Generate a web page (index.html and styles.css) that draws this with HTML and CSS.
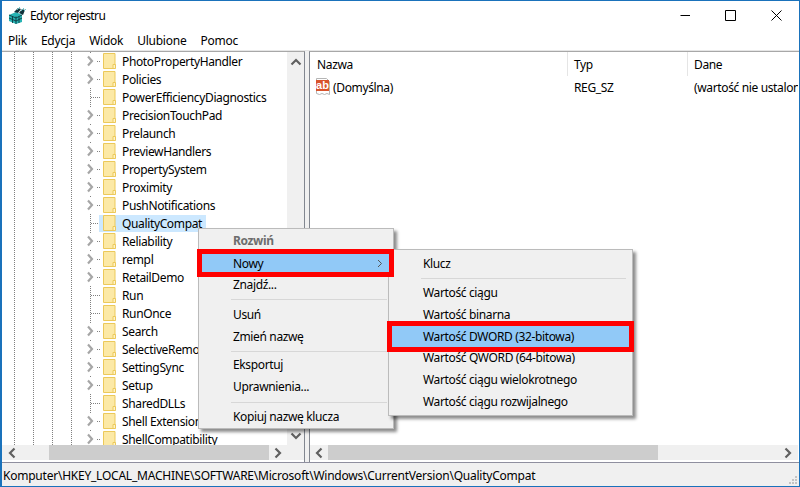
FILE: index.html
```html
<!DOCTYPE html>
<html lang="pl">
<head>
<meta charset="utf-8">
<title>Edytor rejestru</title>
<link rel="stylesheet" href="styles.css">
</head>
<body>
<svg class="defs" width="0" height="0" aria-hidden="true">
  <defs>
    <symbol id="chev" viewBox="0 0 8 12"><path d="M2 1.500 6 6l-4 4.500" fill="none" stroke="#a6a6a6" stroke-width="2.200"/></symbol>
    <symbol id="folder" viewBox="0 0 13 16">
      <path d="M.5.500h11.500v15H.5z" fill="#fce9a6" stroke="#ecc95a"/>
      <path d="M10 15.500v-4h2.500v4z" fill="#fff3c9" stroke="#ecc95a"/>
    </symbol>
  </defs>
</svg>
<div class="window">
  <header class="titlebar">
    <svg class="appicon" width="17" height="17" viewBox="0 0 17 17">
      <path d="M0 8 7 5l6 3v7l-6 2-7-3z" fill="#27b3b3"/>
      <path d="M7 9.500V17M0 8l7 3 6-3M3.500 9.500v6.500M10 9.500V16M0 11l7 3 6-3" stroke="#0b3a42" stroke-width=".9" fill="none"/>
      <path d="M5 5 9 1l3 1-3 4zM10 6l3-4 3 1-2 5z" fill="#10323a"/>
      <path d="M8 3l3-3M12 4l3-3M15 4l2-2" stroke="#5fc4c8" stroke-width=".9"/>
    </svg>
    <span class="title">Edytor rejestru</span>
    <div class="controls">
      <span class="ctl"><svg width="11" height="11" viewBox="0 0 11 11"><path d="M1.500 5.500H11" stroke="#000"/></svg></span>
      <span class="ctl"><svg width="11" height="11" viewBox="0 0 11 11"><path d="M.5.500h10v10H.5z" fill="none" stroke="#000"/></svg></span>
      <span class="ctl"><svg width="11" height="11" viewBox="0 0 11 11"><path d="M.5.500l10 10M10.500.500l-10 10" stroke="#000"/></svg></span>
    </div>
  </header>
  <nav class="menubar">
    <span>Plik</span><span>Edycja</span><span>Widok</span><span>Ulubione</span><span>Pomoc</span>
  </nav>
  <main class="panes">
    <section class="treepane">
      <div class="treebody">
        <div class="tree">
          <div class="row"><span class="exp"><svg width="8" height="12"><use href="#chev"/></svg></span><span class="stub"></span><svg class="fold" width="13" height="16"><use href="#folder"/></svg><span class="lbl">PhotoPropertyHandler</span></div>
          <div class="row"><span class="exp"><svg width="8" height="12"><use href="#chev"/></svg></span><span class="stub"></span><svg class="fold" width="13" height="16"><use href="#folder"/></svg><span class="lbl">Policies</span></div>
          <div class="row leaf"><span class="exp"></span><span class="stub"></span><svg class="fold" width="13" height="16"><use href="#folder"/></svg><span class="lbl">PowerEfficiencyDiagnostics</span></div>
          <div class="row"><span class="exp"><svg width="8" height="12"><use href="#chev"/></svg></span><span class="stub"></span><svg class="fold" width="13" height="16"><use href="#folder"/></svg><span class="lbl">PrecisionTouchPad</span></div>
          <div class="row"><span class="exp"><svg width="8" height="12"><use href="#chev"/></svg></span><span class="stub"></span><svg class="fold" width="13" height="16"><use href="#folder"/></svg><span class="lbl">Prelaunch</span></div>
          <div class="row"><span class="exp"><svg width="8" height="12"><use href="#chev"/></svg></span><span class="stub"></span><svg class="fold" width="13" height="16"><use href="#folder"/></svg><span class="lbl">PreviewHandlers</span></div>
          <div class="row"><span class="exp"><svg width="8" height="12"><use href="#chev"/></svg></span><span class="stub"></span><svg class="fold" width="13" height="16"><use href="#folder"/></svg><span class="lbl">PropertySystem</span></div>
          <div class="row"><span class="exp"><svg width="8" height="12"><use href="#chev"/></svg></span><span class="stub"></span><svg class="fold" width="13" height="16"><use href="#folder"/></svg><span class="lbl">Proximity</span></div>
          <div class="row"><span class="exp"><svg width="8" height="12"><use href="#chev"/></svg></span><span class="stub"></span><svg class="fold" width="13" height="16"><use href="#folder"/></svg><span class="lbl">PushNotifications</span></div>
          <div class="row leaf selected"><span class="exp"></span><span class="stub"></span><span class="selbox"><svg class="fold" width="13" height="16"><use href="#folder"/></svg><span class="lbl">QualityCompat</span></span></div>
          <div class="row"><span class="exp"><svg width="8" height="12"><use href="#chev"/></svg></span><span class="stub"></span><svg class="fold" width="13" height="16"><use href="#folder"/></svg><span class="lbl">Reliability</span></div>
          <div class="row"><span class="exp"><svg width="8" height="12"><use href="#chev"/></svg></span><span class="stub"></span><svg class="fold" width="13" height="16"><use href="#folder"/></svg><span class="lbl">rempl</span></div>
          <div class="row"><span class="exp"><svg width="8" height="12"><use href="#chev"/></svg></span><span class="stub"></span><svg class="fold" width="13" height="16"><use href="#folder"/></svg><span class="lbl">RetailDemo</span></div>
          <div class="row leaf"><span class="exp"></span><span class="stub"></span><svg class="fold" width="13" height="16"><use href="#folder"/></svg><span class="lbl">Run</span></div>
          <div class="row leaf"><span class="exp"></span><span class="stub"></span><svg class="fold" width="13" height="16"><use href="#folder"/></svg><span class="lbl">RunOnce</span></div>
          <div class="row"><span class="exp"><svg width="8" height="12"><use href="#chev"/></svg></span><span class="stub"></span><svg class="fold" width="13" height="16"><use href="#folder"/></svg><span class="lbl">Search</span></div>
          <div class="row"><span class="exp"><svg width="8" height="12"><use href="#chev"/></svg></span><span class="stub"></span><svg class="fold" width="13" height="16"><use href="#folder"/></svg><span class="lbl">SelectiveRemoteSuspend</span></div>
          <div class="row"><span class="exp"><svg width="8" height="12"><use href="#chev"/></svg></span><span class="stub"></span><svg class="fold" width="13" height="16"><use href="#folder"/></svg><span class="lbl">SettingSync</span></div>
          <div class="row"><span class="exp"><svg width="8" height="12"><use href="#chev"/></svg></span><span class="stub"></span><svg class="fold" width="13" height="16"><use href="#folder"/></svg><span class="lbl">Setup</span></div>
          <div class="row leaf"><span class="exp"></span><span class="stub"></span><svg class="fold" width="13" height="16"><use href="#folder"/></svg><span class="lbl">SharedDLLs</span></div>
          <div class="row"><span class="exp"><svg width="8" height="12"><use href="#chev"/></svg></span><span class="stub"></span><svg class="fold" width="13" height="16"><use href="#folder"/></svg><span class="lbl">Shell Extensions</span></div>
          <div class="row"><span class="exp"><svg width="8" height="12"><use href="#chev"/></svg></span><span class="stub"></span><svg class="fold" width="13" height="16"><use href="#folder"/></svg><span class="lbl">ShellCompatibility</span></div>
        </div>
        <div class="vbar">
          <svg width="12" height="8" viewBox="0 0 12 8"><path d="M1.500 6.500 6 2l4.500 4.500" fill="none" stroke="#606060" stroke-width="2.200"/></svg>
          <svg width="12" height="8" viewBox="0 0 12 8"><path d="M1.500 1.500 6 6l4.500-4.500" fill="none" stroke="#606060" stroke-width="2.200"/></svg>
        </div>
      </div>
      <div class="hbar treeh">
        <svg class="arrow" width="8" height="12" viewBox="0 0 8 12"><path d="M6.500 1.500 2 6l4.500 4.500" fill="none" stroke="#606060" stroke-width="2.200"/></svg>
        <span class="thumb"></span>
        <svg class="arrow" width="8" height="12" viewBox="0 0 8 12"><path d="M1.500 1.500 6 6l-4.500 4.500" fill="none" stroke="#606060" stroke-width="2.200"/></svg>
      </div>
    </section>
    <div class="splitter"></div>
    <section class="listpane">
      <div class="listbody">
        <div class="listhead">
          <span class="col c1">Nazwa</span><span class="col c2">Typ</span><span class="col c3">Dane</span>
        </div>
        <div class="listrow">
          <span class="cell c1">
            <span class="abicon">
              <svg class="abdoc" width="16" height="18" viewBox="0 0 16 18"><path d="M1.500.5h10l3 3v13l-2.500-1-2.500 1-2.500-1-2.500 1-3-1z" fill="#fff" stroke="#b5b5b5"/></svg>
              <span class="abtext">ab</span>
            </span>
            <span>(Domyślna)</span>
          </span>
          <span class="cell c2">REG_SZ</span>
          <span class="cell c3">(wartość nie ustalona)</span>
        </div>
      </div>
      <div class="hbar listh">
        <svg class="arrow" width="8" height="12" viewBox="0 0 8 12"><path d="M6.500 1.500 2 6l4.500 4.500" fill="none" stroke="#606060" stroke-width="2.200"/></svg>
        <span class="thumb"></span>
        <svg class="arrow" width="8" height="12" viewBox="0 0 8 12"><path d="M1.500 1.500 6 6l-4.500 4.500" fill="none" stroke="#606060" stroke-width="2.200"/></svg>
      </div>
    </section>
  </main>
  <footer class="statusbar">
    <span>Komputer\HKEY_LOCAL_MACHINE\SOFTWARE\Microsoft\Windows\CurrentVersion\QualityCompat</span>
    <svg class="grip" width="9" height="9" viewBox="0 0 9 9"><path d="M6 0h2v2H6zM3 3h2v2H3zM6 3h2v2H6zM0 6h2v2H0zM3 6h2v2H3zM6 6h2v2H6z" fill="#c4c4c4"/></svg>
  </footer>

  <div class="ctxmenu">
    <div class="item disabled">Rozwiń</div>
    <div class="item hot nowy"><span>Nowy</span><svg width="6" height="9" viewBox="0 0 6 9"><path d="M1 1l3.500 3.500L1 8" fill="none" stroke="#555"/></svg></div>
    <div class="item">Znajdź...</div>
    <div class="sep sep-a"></div>
    <div class="item">Usuń</div>
    <div class="item">Zmień nazwę</div>
    <div class="sep sep-b"></div>
    <div class="item">Eksportuj</div>
    <div class="item">Uprawnienia...</div>
    <div class="sep sep-c"></div>
    <div class="item">Kopiuj nazwę klucza</div>
  </div>
  <div class="submenu">
    <div class="item">Klucz</div>
    <div class="sep sep-sub"></div>
    <div class="item">Wartość ciągu</div>
    <div class="item">Wartość binarna</div>
    <div class="item hot dword">Wartość DWORD (32-bitowa)</div>
    <div class="item">Wartość QWORD (64-bitowa)</div>
    <div class="item">Wartość ciągu wielokrotnego</div>
    <div class="item">Wartość ciągu rozwijalnego</div>
  </div>
</div>
</body>
</html>
```
FILE: styles.css
```css
* { box-sizing: border-box; }
html, body { margin: 0; padding: 0; }
body {
  width: 800px;
  height: 487px;
  overflow: hidden;
  font-family: "Noto Sans", "Open Sans", sans-serif;
  font-size: 12px;
  letter-spacing: -.36px;
  color: #000;
  background: #fff;
}
.defs { display: block; height: 0; }
.window {
  position: relative;
  width: 800px;
  height: 487px;
  border: 1px solid #1a72bb;
  border-left-width: 2px;
  display: flex;
  flex-direction: column;
  background: #fff;
  overflow: hidden;
}
.titlebar {
  height: 29px;
  display: flex;
  align-items: center;
  padding-left: 7px;
  flex: none;
}
.appicon { flex: none; }
.title { margin-left: 4px; letter-spacing: -.55px; }
.controls { margin-left: auto; display: flex; }
.ctl {
  width: 46px;
  height: 29px;
  display: flex;
  align-items: center;
  justify-content: center;
}
.menubar {
  height: 20px;
  flex: none;
  display: flex;
  align-items: center;
  gap: 14px;
  padding-left: 6px;
  letter-spacing: -.25px;
}
.panes {
  flex: 1;
  min-height: 0;
  display: flex;
  border-top: 1px solid #e6e6e6;
  border-bottom: 1px solid #8f8f9f;
}
.treepane {
  width: 303px;
  flex: none;
  display: flex;
  flex-direction: column;
  border-top: 1px solid #a8a8a8;
  border-right: 1px solid #828790;
  padding-bottom: 2px;
}
.treebody {
  flex: 1;
  min-height: 0;
  display: flex;
}
.tree {
  flex: 1;
  min-width: 0;
  overflow: hidden;
  background-image:
    linear-gradient(#808080 50%, transparent 50%),
    linear-gradient(#808080 50%, transparent 50%),
    linear-gradient(#808080 50%, transparent 50%),
    linear-gradient(#808080 50%, transparent 50%),
    linear-gradient(#808080 50%, transparent 50%);
  background-repeat: repeat-y;
  background-size: 1px 2px;
  background-position: 12px 0, 31px 0, 50px 0, 69px 0, 88px 0;
}
.row {
  height: 18px;
  display: flex;
  align-items: center;
  padding-left: 81px;
  white-space: nowrap;
}
.exp {
  width: 13px;
  height: 16px;
  flex: none;
  display: flex;
  align-items: center;
  background: #fff;
  padding-left: 3px;
}
.leaf .exp { background: none; width: 6px; padding: 0; }
.stub {
  width: 6px;
  height: 1px;
  flex: none;
  margin-left: -1px;
  margin-right: 2px;
  background: repeating-linear-gradient(90deg, #808080 0 1px, transparent 1px 2px) 2px 0 / 100% 1px no-repeat;
}
.leaf .stub { width: 12px; margin-left: 0; }
.fold { flex: none; display: block; }
.lbl { margin-left: 6px; }
.selbox {
  display: flex;
  align-items: center;
  height: 17px;
  margin-left: -4px;
  padding: 0 4px 0 4px;
  background: #cce8ff;
}
.vbar {
  width: 17px;
  flex: none;
  background: #f0f0f0;
  display: flex;
  flex-direction: column;
  align-items: center;
  justify-content: space-between;
  padding: 6px 0 5px;
}
.hbar {
  height: 15px;
  flex: none;
  background: #f0f0f0;
  display: flex;
  align-items: center;
}
.thumb { height: 15px; background: #cdcdcd; display: block; }
.arrow { flex: none; }
.treeh { padding: 0 6px; }
.treeh .thumb { width: 220px; margin: 0 5px 0 33px; }
.splitter { width: 4px; flex: none; background: #f0f0f0; }
.listpane {
  flex: 1;
  min-width: 0;
  display: flex;
  flex-direction: column;
  border-top: 1px solid #a8a8a8;
  border-left: 1px solid #828790;
  padding-bottom: 2px;
}
.listbody { flex: 1; min-height: 0; overflow: hidden; }
.listhead { display: flex; height: 24px; align-items: flex-start; }
.col {
  display: block;
  height: 24px;
  line-height: 25px;
  border-right: 1px solid #e5e5e5;
  padding-left: 6px;
}
.col.c1 { padding-left: 7px; }
.c1 { width: 258px; flex: none; }
.c2 { width: 120px; flex: none; }
.c3 { width: 110px; flex: none; border-right: 0; white-space: nowrap; overflow: hidden; }
.listrow { display: flex; height: 22px; align-items: center; }
.cell { padding-left: 6px; }
.cell.c1 { display: flex; align-items: center; gap: 2px; padding-left: 5px; }
.abicon {
  width: 16px;
  height: 18px;
  flex: none;
  display: grid;
}
.abdoc, .abtext { grid-area: 1 / 1; }
.abtext {
  align-self: start;
  justify-self: start;
  width: 13px;
  height: 11px;
  margin: 2px 0 0 1px;
  line-height: 10px;
  background: #d9532c;
  color: #fff;
  font-family: "Liberation Sans", sans-serif;
  font-weight: 700;
  font-size: 11px;
  letter-spacing: 0;
  text-align: center;
}
.listh { padding: 0 6px 0 5px; margin-right: 1px; }
.listh .thumb { width: 330px; margin: 0 auto 0 5px; }
.statusbar {
  height: 23px;
  flex: none;
  background: #f0f0f0;
  display: flex;
  align-items: center;
  padding: 1px 0 0 1px;
  letter-spacing: -.23px;
  position: relative;
}
.grip { position: absolute; right: 1px; bottom: 1px; }
.ctxmenu, .submenu {
  position: absolute;
  background: #f0f0f0;
  border: 1px solid #bbb;
  box-shadow: 3px 3px 3px rgba(0, 0, 0, .45);
  padding: 0 2px;
  white-space: nowrap;
}
.ctxmenu {
  left: 196px;
  top: 227px;
  width: 196px;
  height: 201px;
  padding-top: 1px;
}
.submenu {
  left: 386px;
  top: 248px;
  width: 245px;
  height: 167px;
  padding-top: 3px;
  z-index: 2;
}
.item {
  height: 22px;
  line-height: 22px;
  padding-left: 32px;
}
.disabled { color: #6d6d6d; font-weight: 700; }
.sep {
  height: 1px;
  background: #d7d7d7;
  margin-left: 30px;
  margin-right: 4px;
}
.sep-a { margin-top: 3px; margin-bottom: 4px; }
.sep-b { margin-top: 3px; margin-bottom: 2px; }
.sep-c { margin-top: 4px; margin-bottom: 3px; }
.sep-sub { margin-top: 3px; margin-bottom: 3px; }
.hot { background: #91c9f7; position: relative; outline: 5px solid #f00; }
.nowy {
  height: 18px;
  line-height: 17px;
  margin: 2px 2px 2px 1px;
  z-index: 3;
  padding-left: 31px;
  display: flex;
  align-items: center;
  justify-content: space-between;
  padding-right: 6px;
}
.dword {
  height: 21px;
  margin: 0 1px;
  z-index: 3;
  line-height: 21px;
  padding-left: 31px;
}
```
